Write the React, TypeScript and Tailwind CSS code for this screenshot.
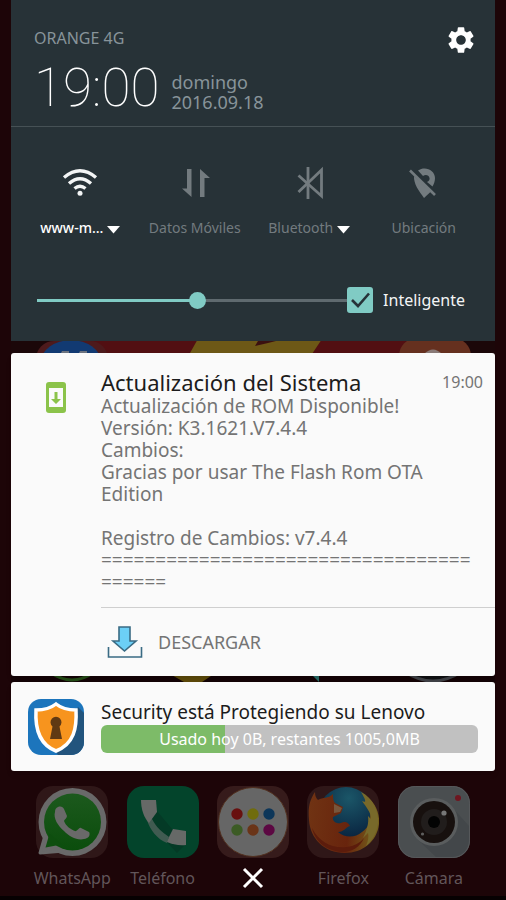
import { useState } from "react";
import type { CSSProperties, ReactNode } from "react";
import { MdSettings } from "react-icons/md";

function Wallpaper() {
  return (
    <svg aria-hidden="true" className="absolute inset-0 h-full w-full" viewBox="0 0 506 900" preserveAspectRatio="none">
      <rect width="506" height="900" fill="#1d0508" />
      <rect x="11" y="330" width="484" height="110" fill="#1b0709" />
      <rect x="80" y="330" width="340" height="110" fill="#520f12" />
      <rect x="36" y="341" width="72" height="72" rx="18" fill="#4d1a1c" />
      <ellipse cx="71" cy="362" rx="30" ry="22" fill="#123a72" />
      <path d="M61 353l1-2h7v2zM79 353l1-2h7v2z" fill="#6d7480" />
      <path d="M203 330h125l-20 30H186z" fill="#6d5816" />
      <path d="M255 346l3-5h18l-8 2z" fill="#3b1010" />
      <rect x="399" y="338" width="72" height="72" rx="18" fill="#65301f" />
      <path d="M424 354q9-9 18 0z" fill="#897a77" />
      <rect x="11" y="670" width="484" height="16" fill="#140406" />
      <path d="M50 672q22 16 44 0" fill="none" stroke="#254d17" strokeWidth="3" />
      <path d="M170 674h44l-12 8h-18z" fill="#5d4a0a" />
      <path d="M311 674l8 8v-8z" fill="#276c68" />
      <path d="M405 672q28 18 56 0" fill="#101113" stroke="#404247" strokeWidth="3" />
      <rect y="896" width="506" height="4" fill="#070102" />
    </svg>
  );
}

function Caret() {
  return (
    <svg aria-hidden="true" width="13" height="8" viewBox="0 0 13 8" className="mt-1 shrink-0">
      <path d="M0 0h13L6.500 7.500z" fill="#fff" />
    </svg>
  );
}

function WifiIcon() {
  return (
    <svg width="36" height="36" viewBox="0 0 36 36" fill="none" stroke="#f3f5f5" strokeWidth="3.400">
      <path d="M2 12.500Q18-1 34 12.500" />
      <path d="M7 18.500Q18 9 29 18.500" />
      <path d="M12.500 23.500Q18 19 23.500 23.500" />
      <circle cx="18" cy="28.300" r="2.500" fill="#f3f5f5" stroke="none" />
    </svg>
  );
}

function DataIcon() {
  return (
    <svg width="36" height="36" viewBox="0 0 36 36" fill="#737b7f">
      <path d="M10 4h4.500v28L5 23.500h5z" />
      <path d="M23 32h4.500V13H33L23 4z" />
    </svg>
  );
}

function BluetoothIcon() {
  return (
    <svg width="36" height="36" viewBox="0 0 36 36" fill="none" stroke="#737b7f" strokeWidth="2.800">
      <path d="M17 2v32" />
      <path d="M7.500 10.500L30.500 31V5L7.500 27" />
    </svg>
  );
}

function LocationOffIcon() {
  return (
    <svg width="36" height="36" viewBox="0 0 36 36" fill="#737b7f">
      <path d="M12 5.500C19 .500 29 5 29 13c0 3-1 6-2.500 8.500L21 17c2-1 3-2.500 2.500-4-.500-3-4-4-6.500-2z" />
      <path d="M8 11l17.500 15L18 33C13 26 7.500 19 8 11z" />
      <path d="M4 5.500L29 30" stroke="#737b7f" strokeWidth="2.600" />
    </svg>
  );
}

type TileProps = { label: string; icon: ReactNode; active?: boolean; menu?: boolean };

function Tile({ label, icon, active = false, menu = false }: TileProps) {
  return (
    <button type="button" className="flex min-w-0 flex-col items-center gap-[17px]">
      {icon}
      <span className="flex items-center gap-1 whitespace-nowrap">
        <span className={active ? "text-sm leading-5 font-medium text-white" : "text-sm leading-5 text-[#737b7f]"}>{label}</span>
        {menu && <Caret />}
      </span>
    </button>
  );
}

function Brightness() {
  const [level, setLevel] = useState(52);
  const [smart, setSmart] = useState(true);
  return (
    <div className="flex items-center pr-[30px] pl-6">
      <input
        type="range"
        aria-label="Brillo"
        min={0}
        max={100}
        value={level}
        onChange={(e) => setLevel(Number(e.target.value))}
        style={{ "--level": level + "%" } as CSSProperties}
        className="m-0 ml-0.5 h-5 min-w-0 flex-1 appearance-none bg-transparent [&::-webkit-slider-runnable-track]:h-[3px] [&::-webkit-slider-runnable-track]:bg-[linear-gradient(to_right,#80cbc4_var(--level),#5f6a6f_var(--level))] [&::-webkit-slider-thumb]:-mt-[7px] [&::-webkit-slider-thumb]:size-[17px] [&::-webkit-slider-thumb]:appearance-none [&::-webkit-slider-thumb]:rounded-full [&::-webkit-slider-thumb]:bg-[#80cbc4]"
      />
      <label className="flex items-center gap-[10px] text-base leading-6 text-[#f3f5f5]">
        <span className="grid">
          <input
            type="checkbox"
            checked={smart}
            onChange={(e) => setSmart(e.target.checked)}
            className="col-start-1 row-start-1 size-[26px] appearance-none rounded-[3px] border-2 border-[#80cbc4] checked:bg-[#80cbc4]"
          />
          {smart && (
            <svg aria-hidden="true" viewBox="0 0 26 26" className="pointer-events-none col-start-1 row-start-1 size-[26px]">
              <path d="M5 13l6 6L22 6.500" fill="none" stroke="#263238" strokeWidth="2.600" />
            </svg>
          )}
        </span>
        Inteligente
      </label>
    </div>
  );
}

function UpdateIcon() {
  return (
    <svg aria-hidden="true" width="20" height="32" viewBox="0 0 20 32">
      <rect width="20" height="31" rx="3" fill="#8bc34a" />
      <path d="M3 6h14v19H3z" fill="#fafafa" />
      <path d="M8.500 10h3v7H15l-5 5-5-5h3.500z" fill="#8bc34a" />
    </svg>
  );
}

function DownloadIcon() {
  return (
    <svg aria-hidden="true" width="36" height="34" viewBox="0 0 36 34" stroke="#3a6b84" strokeWidth="1.600">
      <path d="M12 2h11v14h6L17.500 26 6 16h6z" fill="#6ccff6" />
      <path d="M1.500 22v10h33V22" fill="none" />
    </svg>
  );
}

function ShieldIcon() {
  return (
    <svg aria-hidden="true" width="56" height="56" viewBox="0 0 56 56">
      <defs>
        <clipPath id="shield-tile">
          <rect width="56" height="56" rx="13" />
        </clipPath>
      </defs>
      <g clipPath="url(#shield-tile)">
        <rect width="56" height="56" fill="#1c75bc" />
        <path d="M50 8l6 6v42H30l-2-3z" fill="#22547d" />
      </g>
      <path d="M28 5c5 4 12 6 20 6 1 18-2 34-20 41C10 45 7 28 8 11c8 0 15-2 20-6z" fill="#f7941e" stroke="#fff" strokeWidth="3.500" />
      <path d="M24.500 27.500a5.500 5.500 0 1 1 7 0L34 40H22z" fill="#603913" />
    </svg>
  );
}

function WhatsAppIcon() {
  return (
    <svg aria-hidden="true" viewBox="0 0 72 72" className="size-[72px]">
      <defs>
        <linearGradient id="wa" x2="0" y2="1">
          <stop stopColor="#1c591d" />
          <stop offset="1" stopColor="#0b4d0c" />
        </linearGradient>
      </defs>
      <rect width="72" height="72" rx="17" fill="#2f1718" />
      <circle cx="36.500" cy="36" r="34" fill="#696969" />
      <path d="M4 67l6-21 18 19z" fill="#696969" stroke="#696969" strokeWidth="3" strokeLinejoin="round" />
      <circle cx="36.500" cy="36" r="28.500" fill="url(#wa)" />
      <path d="M9.500 61.500l4-14 12 11z" fill="#0e4e0f" />
      <path d="M22 21c3-1 5 0 6 2l3 7c0 2-3 4-3 5 2 5 6 8 11 10 2 1 4-4 6-3l8 4c1 1 1 5-2 6-8 4-17-1-23-7-6-5-11-13-9-19 0-3 1-4 3-5z" fill="#696969" />
    </svg>
  );
}

function PhoneIcon() {
  return (
    <svg aria-hidden="true" viewBox="0 0 72 72" className="size-[72px]">
      <rect width="72" height="72" rx="17" fill="#03442b" />
      <path d="M30 25l15 18 13 16-8 8-28-30z" fill="#043a26" />
      <path d="M20 34l5-1c4 8 10 13 17 18l-2 6C30 53 23 44 20 34z" fill="#405b51" />
      <path d="M14 14h15l1 12-8 11c-5-5-8-14-8-23z" fill="#666967" />
      <path d="M46 43l13 2v14c-7 1-14-1-19-3l2-5z" fill="#666967" />
    </svg>
  );
}

const dots = [
  { x: 20, y: 28, fill: "#68100f" },
  { x: 36, y: 28, fill: "#706c0d" },
  { x: 52, y: 28, fill: "#0d3659" },
  { x: 20, y: 44, fill: "#3c5b25" },
  { x: 36, y: 44, fill: "#6a3418" },
  { x: 52, y: 44, fill: "#5c0742" },
];

function AppsIcon() {
  return (
    <svg aria-hidden="true" viewBox="0 0 72 72" className="size-[72px]">
      <rect width="72" height="72" rx="17" fill="#361b1b" />
      <circle cx="36" cy="36" r="34.500" fill="#666" stroke="#51301f" />
      {dots.map((d) => (
        <circle key={d.fill} cx={d.x} cy={d.y} r="5.700" fill={d.fill} />
      ))}
    </svg>
  );
}

function FirefoxIcon() {
  return (
    <svg aria-hidden="true" viewBox="0 0 72 72" className="size-[72px]">
      <defs>
        <radialGradient id="globe" cx=".55" cy=".2" r=".8">
          <stop stopColor="#1b5668" />
          <stop offset="1" stopColor="#071e3b" />
        </radialGradient>
        <linearGradient id="fox" x1="0" y1=".2" x2="1" y2=".3">
          <stop stopColor="#703313" />
          <stop offset=".6" stopColor="#68240d" />
          <stop offset="1" stopColor="#75601c" />
        </linearGradient>
      </defs>
      <rect width="72" height="72" rx="17" fill="#2f1718" />
      <circle cx="39" cy="29" r="28" fill="url(#globe)" />
      <path
        d="M8 6c0 4 1 6 3 8 5-3 10-1 15-6 0 4 0 7 2 9l8 4-2 6-8 4c-1 4 3 7 8 6 4-2 7-1 9 3-4 1-6 6-12 6 7 6 17 6 24 0 7-4 9-12 8-22l3 3c0-7-5-12-9-18 11 6 16 18 15 29C70 56 55 67 38 67 17 67 3 52 2 34 1 23 2 15 8 6z"
        fill="url(#fox)"
      />
      <path d="M54 6c12 6 18 19 17 31-1 9-5 17-12 23 2-5 3-9 2-13l-5 5c4-8 6-15 5-22l3 3c0-7-5-12-9-18 4 2 5 1-1-9z" fill="#78692a" />
      <path d="M27 18l8 4-2 4-6 1z" fill="#77563c" />
      <path d="M5 42c7 14 20 21 35 19 7-1 13-4 17-9-4 9-12 14-22 14C20 65 8 56 5 42z" fill="#5c1c0c" />
    </svg>
  );
}

function CameraIcon() {
  return (
    <svg aria-hidden="true" viewBox="0 0 72 72" className="size-[72px]">
      <rect width="72" height="72" rx="17" fill="#4a4e50" />
      <path d="M54 21l17 19v15c0 9-7 16-16 16H38L19 53z" fill="#43474a" />
      <rect x=".5" y=".5" width="71" height="71" rx="17" fill="none" stroke="#56585a" />
      <circle cx="36" cy="36" r="24" fill="#5a5d5e" />
      <circle cx="36" cy="36" r="21" fill="#17100e" />
      <circle cx="36" cy="36" r="13" fill="#211d1c" />
      <circle cx="36" cy="36" r="6" fill="#030303" />
      <circle cx="46" cy="27" r="2.600" fill="#777" />
      <circle cx="24.500" cy="48" r="1.600" fill="#5f5f5f" />
      <circle cx="60" cy="12" r="3" fill="#6e1620" />
    </svg>
  );
}

function DockApp({ name, icon }: { name: string; icon: ReactNode }) {
  return (
    <a href="#" className="flex flex-col items-center gap-2 text-base leading-6 text-[#62565a]">
      {icon}
      {name}
    </a>
  );
}

export default function App() {
  return (
    <div className="relative min-h-screen bg-[#1d0508] font-['Noto_Sans','Open_Sans',sans-serif]">
      <Wallpaper />
      <main className="relative flex flex-col px-[11px]">
        <section className="bg-[#273237] pb-7">
          <header className="flex justify-between border-b border-[#465155] pt-6 pr-[18px] pb-[10px] pl-[23px]">
            <div>
              <p className="text-base leading-7 text-[#88949a]">ORANGE 4G</p>
              <div className="flex items-center gap-3 pt-2">
                <time className="font-[Roboto] text-[53px] leading-14 font-thin text-white">19:00</time>
                <p className="pt-2 text-lg leading-5 text-[#88949a]">
                  domingo
                  <br />
                  2016.09.18
                </p>
              </div>
            </div>
            <button type="button" aria-label="Ajustes" className="self-start text-white">
              <MdSettings className="size-8" />
            </button>
          </header>
          <div className="grid grid-cols-4 pt-[38px] pr-[14px] pb-[49px] pl-3">
            <Tile label="www-m…" icon={<WifiIcon />} active menu />
            <Tile label="Datos Móviles" icon={<DataIcon />} />
            <Tile label="Bluetooth" icon={<BluetoothIcon />} menu />
            <Tile label="Ubicación" icon={<LocationOffIcon />} />
          </div>
          <Brightness />
        </section>

        <article className="mt-3 flex rounded-[3px] bg-[#fafafa] shadow-md">
          <div className="w-[90px] shrink-0 pt-[29px] pl-[35px]">
            <UpdateIcon />
          </div>
          <div className="min-w-0 flex-1">
            <div className="flex items-center justify-between pt-4 pr-3">
              <h2 className="text-[22px] leading-[26px] text-[#1c1c1c]">Actualización del Sistema</h2>
              <time className="text-base leading-5 text-[#747474]">19:00</time>
            </div>
            <p className="pb-[14px] text-[19px] leading-[22px] whitespace-nowrap text-[#747474]">
              Actualización de ROM Disponible!
              <br />
              Versión: K3.1621.V7.4.4
              <br />
              Cambios:
              <br />
              Gracias por usar The Flash Rom OTA
              <br />
              Edition
              <br />
              <br />
              Registro de Cambios: v7.4.4
              <br />
              ==================================
              <br />
              ======
            </p>
            <div className="border-t border-[#cfcfcf]">
              <button type="button" className="flex h-[68px] items-center gap-[15px] pl-[6px] text-lg text-[#747474]">
                <DownloadIcon />
                DESCARGAR
              </button>
            </div>
          </div>
        </article>

        <article className="mt-[6px] flex h-[89px] rounded-[3px] bg-[#fafafa] shadow-md">
          <div className="w-[90px] shrink-0 pt-[17px] pl-[17px]">
            <ShieldIcon />
          </div>
          <div className="min-w-0 flex-1 pt-[17px] pr-[17px]">
            <h2 className="text-[19px] leading-[26px] whitespace-nowrap text-[#1c1c1c]">Security está Protegiendo su Lenovo</h2>
            <div className="flex h-7 items-center justify-center rounded-[6px] bg-[linear-gradient(to_right,#7dbb68_33%,#c1c1c1_33%)] text-base text-white">
              Usado hoy 0B, restantes 1005,0MB
            </div>
          </div>
        </article>

        <nav className="mt-[15px] grid grid-cols-5 px-4">
          <DockApp name="WhatsApp" icon={<WhatsAppIcon />} />
          <DockApp name="Teléfono" icon={<PhoneIcon />} />
          <div className="flex flex-col items-center gap-2">
            <AppsIcon />
            <button type="button" aria-label="Cerrar" className="flex h-6 items-center">
              <svg width="22" height="22" viewBox="0 0 22 22">
                <path d="M2 2l18 18M20 2L2 20" stroke="#fff" strokeWidth="3" />
              </svg>
            </button>
          </div>
          <DockApp name="Firefox" icon={<FirefoxIcon />} />
          <DockApp name="Cámara" icon={<CameraIcon />} />
        </nav>
      </main>
    </div>
  );
}
